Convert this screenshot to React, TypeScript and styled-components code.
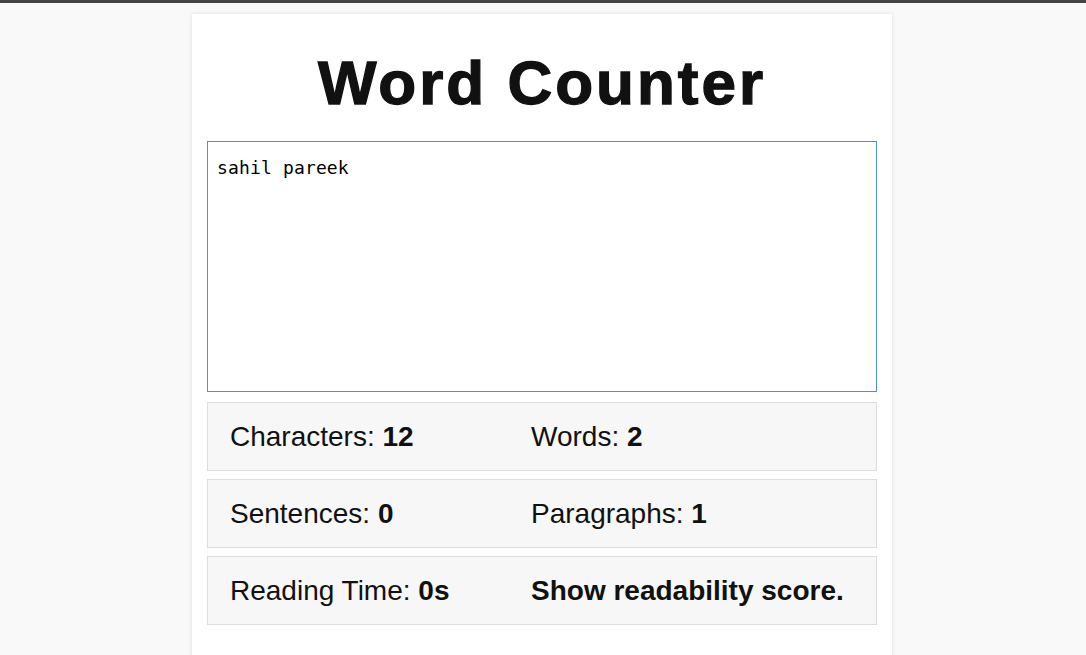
import React, { useState } from 'react';
import styled, { createGlobalStyle } from 'styled-components';

const GlobalStyle = createGlobalStyle`
  html, body {
    margin: 0;
    padding: 0;
    background: #f9f9f9;
    font-family: "Liberation Sans", Arial, sans-serif;
    color: #111;
  }
  body {
    border-top: 3px solid #454545;
    padding-right: 2px;
  }
`;

const Card = styled.main`
  width: 700px;
  margin: 11px auto 0;
  background: #fff;
  box-shadow: 0 0 4px rgba(0, 0, 0, 0.12);
  padding: 32px 15px 30px;
  box-sizing: border-box;
  min-height: 660px;
`;

const Title = styled.h1`
  margin: 0 0 22px;
  text-align: center;
  font-size: 62px;
  line-height: 73px;
  font-weight: 700;
  letter-spacing: 3px;
  -webkit-text-stroke: 1.3px #111;
  color: #111;
`;

const Editor = styled.textarea`
  display: block;
  width: 100%;
  height: 251px;
  box-sizing: border-box;
  border: 1px solid #4a90e2;
  outline: none;
  resize: none;
  padding: 13px 9px 10px;
  font-family: "DejaVu Sans Mono", "Liberation Mono", monospace;
  font-size: 18px;
  letter-spacing: 0.15px;
  line-height: 26px;
  color: #000;
`;

const Stats = styled.section`
  display: flex;
  flex-direction: column;
  gap: 8px;
  margin-top: 10px;
`;

const Row = styled.div`
  display: grid;
  grid-template-columns: 301px 1fr;
  align-items: center;
  padding: 18px 22px 17px;
  background: #f7f7f7;
  border: 1px solid #dddddd;
  font-size: 28px;
  line-height: 32px;
`;

const Stat = styled.span<{ $strong?: boolean }>`
  font-weight: ${p => (p.$strong ? 700 : 400)};
  white-space: nowrap;
  b {
    font-weight: 700;
  }
`;

const countStats = (text: string) => {
  const words = text.trim() ? text.trim().split(/\s+/).length : 0;
  const sentences = (text.match(/[.!?]+/g) || []).length;
  const paragraphs = text.trim() ? text.split(/\n+/).filter(p => p.trim()).length : 0;
  const secs = Math.round((words / 275) * 60 / 60);
  return { chars: text.length, words, sentences, paragraphs, time: secs + 's' };
};

const App = () => {
  const [text, setText] = useState('sahil pareek');
  const s = countStats(text);

  return (
    <>
      <GlobalStyle />
      <Card>
        <Title>Word Counter</Title>
        <Editor value={text} onChange={e => setText(e.target.value)} spellCheck />
        <Stats>
          <Row>
            <Stat>Characters: <b>{s.chars}</b></Stat>
            <Stat>Words: <b>{s.words}</b></Stat>
          </Row>
          <Row>
            <Stat>Sentences: <b>{s.sentences}</b></Stat>
            <Stat>Paragraphs: <b>{s.paragraphs}</b></Stat>
          </Row>
          <Row>
            <Stat>Reading Time: <b>{s.time}</b></Stat>
            <Stat $strong>Show readability score.</Stat>
          </Row>
        </Stats>
      </Card>
    </>
  );
};

export default App;
